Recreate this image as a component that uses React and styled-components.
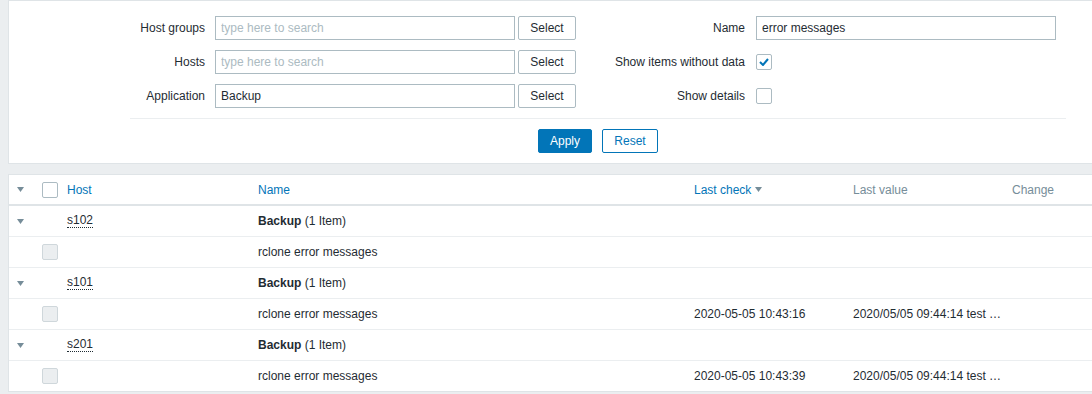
import React from 'react';
import styled, { createGlobalStyle } from 'styled-components';

const GlobalStyle = createGlobalStyle`
  html, body {
    margin: 0;
    padding: 0;
    background: #ebeef0;
    overflow: hidden;
  }
  body {
    font-family: Arial, "Liberation Sans", sans-serif;
    font-size: 12px;
    color: #1f2c33;
  }
`;

const Page = styled.div`
  padding-left: 8px;
  width: 1120px;
  display: flex;
  flex-direction: column;
  gap: 10px;
`;

const FilterPanel = styled.div`
  background: #fff;
  border: 1px solid #dfe4e7;
  padding: 15px 0 10px 121px;
`;

const FormGrid = styled.div`
  width: 936px;
  display: grid;
  grid-template-columns: 468px 468px;
  row-gap: 10px;
`;

const Field = styled.div`
  display: flex;
  align-items: center;
  height: 24px;
`;

const Label = styled.label`
  width: ${p => p.$w}px;
  margin-right: ${p => p.$gap}px;
  text-align: right;
  white-space: nowrap;
`;

const TextInput = styled.input`
  box-sizing: border-box;
  width: 300px;
  height: 24px;
  margin: 0;
  padding: 0 5px;
  border: 1px solid #acbbc2;
  border-radius: 0;
  font: inherit;
  font-size: 12px;
  color: #1f2c33;
  background: #fff;
  outline: none;

  &::placeholder {
    color: #acbbc2;
  }
`;

const SelectButton = styled.button`
  box-sizing: border-box;
  width: 58px;
  height: 24px;
  margin: 0 0 0 3px;
  padding: 0;
  border: 1px solid #acbbc2;
  border-radius: 2px;
  background: #fff;
  font: inherit;
  font-size: 12px;
  color: #1f2c33;
`;

const Check = styled.span`
  box-sizing: border-box;
  width: 16px;
  height: 16px;
  border: 1px solid #acbbc2;
  border-radius: 2px;
  background: ${p => (p.$disabled ? '#ebeef0' : '#fff')};
  border-color: ${p => (p.$disabled ? '#cfd7db' : '#acbbc2')};
  display: inline-flex;
  align-items: center;
  justify-content: center;
`;

const Separator = styled.div`
  width: 936px;
  margin-top: 10px;
  border-top: 1px solid #ebeef0;
`;

const ButtonBar = styled.div`
  width: 936px;
  margin-top: 10px;
  display: flex;
  justify-content: center;
  gap: 10px;
`;

const ActionButton = styled.button`
  box-sizing: border-box;
  width: ${p => p.$w}px;
  height: 24px;
  margin: 0;
  padding: 0;
  border: 1px solid #0275b8;
  border-radius: 2px;
  background: ${p => (p.$primary ? '#0275b8' : '#fff')};
  color: ${p => (p.$primary ? '#fff' : '#0275b8')};
  font: inherit;
  font-size: 12px;
`;

const TablePanel = styled.div`
  background: #fff;
  border: 1px solid #dfe4e7;
`;

const Row = styled.div`
  display: grid;
  grid-template-columns: 33px 25px 191px 436px 159px 159px 1fr;
  align-items: center;
  height: ${p => (p.$head ? 29 : 30)}px;
  border-bottom: ${p => (p.$head ? '2px solid #dfe4e7' : p.$last ? 'none' : '1px solid #ebeef0')};
  white-space: nowrap;
`;

const Cell = styled.div`
  display: flex;
  align-items: center;
  padding-left: ${p => p.$pad || 0}px;
`;

const HeadLink = styled.span`
  color: ${p => (p.$muted ? '#768d99' : '#0275b8')};
  display: inline-flex;
  align-items: center;
`;

const HostLink = styled.span`
  border-bottom: 1px dotted #1f2c33;
  line-height: 13px;
`;

const Arrow = ({ size = 7 }) => (
  <svg width={size} height={size - 2} viewBox="0 0 7 5">
    <path d="M0 0 L7 0 L3.5 5 Z" fill="#768d99" />
  </svg>
);

const CheckMark = () => (
  <svg width="10" height="8" viewBox="0 0 10 8">
    <path d="M1 4 L4 7 L9 1" fill="none" stroke="#0275b8" strokeWidth="2" />
  </svg>
);

const groups = [
  { host: 's102', check: '', value: '' },
  { host: 's101', check: '2020-05-05 10:43:16', value: '2020/05/05 09:44:14 test …' },
  { host: 's201', check: '2020-05-05 10:43:39', value: '2020/05/05 09:44:14 test …' },
];

export default function App() {
  return (
    <>
      <GlobalStyle />
      <Page>
        <FilterPanel>
          <FormGrid>
            <Field>
              <Label $w={75} $gap={10}>Host groups</Label>
              <TextInput placeholder="type here to search" />
              <SelectButton>Select</SelectButton>
            </Field>
            <Field>
              <Label $w={147} $gap={11}>Name</Label>
              <TextInput defaultValue="error messages" />
            </Field>
            <Field>
              <Label $w={75} $gap={10}>Hosts</Label>
              <TextInput placeholder="type here to search" />
              <SelectButton>Select</SelectButton>
            </Field>
            <Field>
              <Label $w={147} $gap={11}>Show items without data</Label>
              <Check><CheckMark /></Check>
            </Field>
            <Field>
              <Label $w={75} $gap={10}>Application</Label>
              <TextInput defaultValue="Backup" />
              <SelectButton>Select</SelectButton>
            </Field>
            <Field>
              <Label $w={147} $gap={11}>Show details</Label>
              <Check />
            </Field>
          </FormGrid>
          <Separator />
          <ButtonBar>
            <ActionButton $primary $w={54}>Apply</ActionButton>
            <ActionButton $w={56}>Reset</ActionButton>
          </ButtonBar>
        </FilterPanel>

        <TablePanel>
          <Row $head>
            <Cell $pad={8}><Arrow /></Cell>
            <Cell><Check /></Cell>
            <Cell><HeadLink>Host</HeadLink></Cell>
            <Cell><HeadLink>Name</HeadLink></Cell>
            <Cell>
              <HeadLink>Last check&nbsp;<Arrow /></HeadLink>
            </Cell>
            <Cell><HeadLink $muted>Last value</HeadLink></Cell>
            <Cell><HeadLink $muted>Change</HeadLink></Cell>
          </Row>
          {groups.map((g, i) => (
            <React.Fragment key={g.host}>
              <Row>
                <Cell $pad={8}><Arrow /></Cell>
                <Cell />
                <Cell><HostLink>{g.host}</HostLink></Cell>
                <Cell><span><b>Backup</b> (1 Item)</span></Cell>
                <Cell />
                <Cell />
                <Cell />
              </Row>
              <Row $last={i === groups.length - 1}>
                <Cell />
                <Cell><Check $disabled /></Cell>
                <Cell />
                <Cell>rclone error messages</Cell>
                <Cell>{g.check}</Cell>
                <Cell>{g.value}</Cell>
                <Cell />
              </Row>
            </React.Fragment>
          ))}
        </TablePanel>
      </Page>
    </>
  );
}
